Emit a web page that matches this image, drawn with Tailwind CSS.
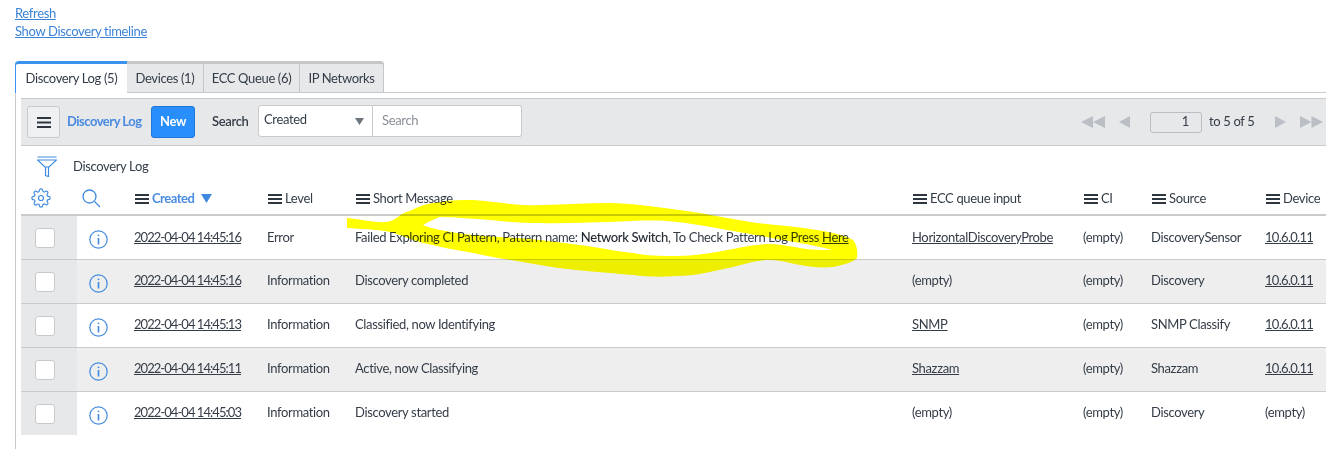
<!DOCTYPE html>
<html>
<head>
<meta charset="utf-8">
<script src="https://cdn.jsdelivr.net/npm/@tailwindcss/browser@4"></script>
</head>
<body class="relative bg-white overflow-hidden h-[449px] w-[1326px] font-['Lato','Noto_Sans',sans-serif] text-[13px] tracking-[-0.35px] text-[#343d47]">
  <div class="pt-[4px] pl-[15px] h-[61px]">
    <a class="block h-[18px] leading-[18px] text-[#3b83d8] underline">Refresh</a>
    <a class="block h-[18px] leading-[18px] text-[#3b83d8] underline">Show Discovery timeline</a>
  </div>

  <div class="ml-[15px] flex h-[32px] border-b border-[#c8cacc]">
    <div class="w-[112px] h-[32px] pt-[1px] bg-white border-t-[3px] border-l border-[#3b93ee] flex items-center justify-center rounded-tl-sm">Discovery Log (5)</div>
    <div class="w-[77px] pt-[1px] bg-[#e6e8ea] border-t-[3px] border-r border-[#c4c6c8] flex items-center justify-center">Devices (1)</div>
    <div class="w-[96px] pt-[1px] bg-[#e6e8ea] border-t-[3px] border-r border-[#c4c6c8] flex items-center justify-center">ECC Queue (6)</div>
    <div class="w-[84px] pt-[1px] bg-[#e6e8ea] border-t-[3px] border-r border-[#c4c6c8] flex items-center justify-center rounded-tr-sm">IP Networks</div>
  </div>

  <div class="ml-[15px] border-l border-[#c8cacc] pl-[5px] pt-[5px] h-[356px]">
    <div class="flex items-center h-[48px] bg-[#e6e8ea] border-y border-[#c8cacc] pl-[6px] pr-[3px]">
      <button class="w-[33px] h-[32px] border border-[#c8cacc] bg-[#eef0f1] rounded-[3px] flex items-center justify-center">
        <svg width="14" height="11" viewBox="0 0 14 11"><path d="M0 1h14M0 5.500h14M0 10h14" stroke="#2e3640" stroke-width="2"/></svg>
      </button>
      <span class="ml-[7px] w-[75px] whitespace-nowrap font-bold text-[#4a8be0] tracking-[-0.5px]">Discovery Log</span>
      <button class="ml-[9px] w-[44px] h-[32px] bg-[#278efc] border border-[#1f78d8] rounded-[3px] text-white font-bold">New</button>
      <span class="ml-[17px] w-[37px] font-semibold">Search</span>
      <div class="ml-[9px] w-[115px] h-[32px] bg-white border border-[#c8cacc] rounded-l-[3px] flex items-center justify-between pl-[5px] pr-[8px] pb-[3px] -mt-[2px]">
        <span>Created</span>
        <svg width="9" height="7" viewBox="0 0 9 7" class="mt-[3px]"><path d="M0 0h9L4.500 7z" fill="#6d757d"/></svg>
      </div>
      <div class="w-[149px] h-[32px] -mt-[2px] bg-white border border-l-0 border-[#c8cacc] rounded-r-[3px] flex items-center pl-[9px] text-[#8a9097]">Search</div>
      <div class="ml-auto flex items-center">
        <svg width="24" height="12" viewBox="0 0 24 12"><path d="M12 0v12L0 6zM24 0v12L12 6z" fill="#b9bfc5"/></svg>
        <svg class="ml-[14px]" width="11" height="12" viewBox="0 0 11 12"><path d="M11 0v12L0 6z" fill="#b9bfc5"/></svg>
        <div class="ml-[20px] w-[52px] h-[21px] border border-[#b9bfc5] rounded-[3px] flex items-center justify-end pr-[12px]">1</div>
        <span class="ml-[7px] w-[46px] whitespace-nowrap">to 5 of 5</span>
        <svg class="ml-[20px]" width="11" height="12" viewBox="0 0 11 12"><path d="M0 0v12l11-6z" fill="#b9bfc5"/></svg>
        <svg class="ml-[14px]" width="23" height="12" viewBox="0 0 23 12"><path d="M0 0v12l11.500-6zM11.500 0v12L23 6z" fill="#b9bfc5"/></svg>
      </div>
    </div>

    <div class="flex items-center h-[36px] pt-[5px]">
      <svg class="ml-[16px]" width="20" height="21" viewBox="0 0 20 21" fill="none" stroke="#3f8ae0" stroke-width="1.200"><path d="M0.500 1h19M0.500 4h19L12 11H8zM8 11h4"/><path d="M8.500 11v8.500l3 1V11" /></svg>
      <span class="ml-[16px]">Discovery Log</span>
    </div>

    <table class="table-fixed w-[1305px] border-collapse whitespace-nowrap">
      <colgroup>
        <col class="w-[56px]"><col class="w-[49px]"><col class="w-[133px]"><col class="w-[88px]"><col class="w-[557px]"><col class="w-[171px]"><col class="w-[68px]"><col class="w-[114px]"><col class="w-[69px]">
      </colgroup>
      <thead>
        <tr class="h-[33px] border-b-2 border-[#c8cacc] text-left font-medium">
          <th class="font-normal pl-[10px]">
            <svg width="20" height="20" viewBox="0 0 24 24" fill="none" stroke="#3f8ae0" stroke-width="1.400"><circle cx="12" cy="12" r="3"/><path d="M19.400 15a1.650 1.650 0 0 0 .33 1.820l.06.06a2 2 0 0 1 0 2.830 2 2 0 0 1-2.830 0l-.06-.06a1.650 1.650 0 0 0-1.820-.33 1.650 1.650 0 0 0-1 1.510V21a2 2 0 0 1-2 2 2 2 0 0 1-2-2v-.09A1.650 1.650 0 0 0 9 19.400a1.650 1.650 0 0 0-1.820.33l-.06.06a2 2 0 0 1-2.830 0 2 2 0 0 1 0-2.830l.06-.06a1.650 1.650 0 0 0 .33-1.820 1.650 1.650 0 0 0-1.510-1H3a2 2 0 0 1-2-2 2 2 0 0 1 2-2h.09A1.650 1.650 0 0 0 4.600 9a1.650 1.650 0 0 0-.33-1.820l-.06-.06a2 2 0 0 1 0-2.830 2 2 0 0 1 2.830 0l.06.06a1.650 1.650 0 0 0 1.820.33H9a1.650 1.650 0 0 0 1-1.510V3a2 2 0 0 1 2-2 2 2 0 0 1 2 2v.09a1.650 1.650 0 0 0 1 1.510 1.650 1.650 0 0 0 1.820-.33l.06-.06a2 2 0 0 1 2.830 0 2 2 0 0 1 0 2.830l-.06.06a1.650 1.650 0 0 0-.33 1.820V9a1.650 1.650 0 0 0 1.510 1H21a2 2 0 0 1 2 2 2 2 0 0 1-2 2h-.09a1.650 1.650 0 0 0-1.510 1z"/></svg>
          </th>
          <th class="font-normal pl-[5px]">
            <svg width="19" height="19" viewBox="0 0 19 19" fill="none" stroke="#3f8ae0" stroke-width="1.300"><circle cx="7.500" cy="7.500" r="6.500"/><path d="M12.500 12.500L18 18"/></svg>
          </th>
          <th class="font-normal pl-[9px] pt-[2px]"><span class="inline-flex items-center text-[#4a8be0] font-bold tracking-[-0.5px]"><svg class="mr-[3px]" width="14" height="10" viewBox="0 0 14 10"><path d="M0 1h14M0 5h14M0 9h14" stroke="#2e3640" stroke-width="2"/></svg>Created<svg class="ml-[7px]" width="11" height="9" viewBox="0 0 11 9"><path d="M0 0h11L5.500 9z" fill="#3f8ae0"/></svg></span></th>
          <th class="font-normal pl-[9px] pt-[2px]"><span class="inline-flex items-center"><svg class="mr-[3px]" width="14" height="10" viewBox="0 0 14 10"><path d="M0 1h14M0 5h14M0 9h14" stroke="#2e3640" stroke-width="2"/></svg>Level</span></th>
          <th class="font-normal pl-[9px] pt-[2px]"><span class="inline-flex items-center"><svg class="mr-[3px]" width="14" height="10" viewBox="0 0 14 10"><path d="M0 1h14M0 5h14M0 9h14" stroke="#2e3640" stroke-width="2"/></svg>Short Message</span></th>
          <th class="font-normal pl-[9px] pt-[2px]"><span class="inline-flex items-center"><svg class="mr-[3px]" width="14" height="10" viewBox="0 0 14 10"><path d="M0 1h14M0 5h14M0 9h14" stroke="#2e3640" stroke-width="2"/></svg>ECC queue input</span></th>
          <th class="font-normal pl-[9px] pt-[2px]"><span class="inline-flex items-center"><svg class="mr-[3px]" width="14" height="10" viewBox="0 0 14 10"><path d="M0 1h14M0 5h14M0 9h14" stroke="#2e3640" stroke-width="2"/></svg>CI</span></th>
          <th class="font-normal pl-[9px] pt-[2px]"><span class="inline-flex items-center"><svg class="mr-[3px]" width="14" height="10" viewBox="0 0 14 10"><path d="M0 1h14M0 5h14M0 9h14" stroke="#2e3640" stroke-width="2"/></svg>Source</span></th>
          <th class="font-normal pl-[9px] pt-[2px]"><span class="inline-flex items-center"><svg class="mr-[3px]" width="14" height="10" viewBox="0 0 14 10"><path d="M0 1h14M0 5h14M0 9h14" stroke="#2e3640" stroke-width="2"/></svg>Device</span></th>
        </tr>
      </thead>
      <tbody>
        <tr class="h-[44px] border-b border-[#c8cacc] bg-white">
          <td class="bg-[#e6e8ea] pl-[14px]"><div class="w-[20px] h-[20px] mt-[1px] bg-white border border-[#c8cacc] rounded-[3px]"></div></td>
          <td class="pl-[12px]"><svg width="19" height="19" viewBox="0 0 19 19" fill="none" stroke="#3f8ae0" stroke-width="1.200" class="mt-[4px]"><circle cx="9.500" cy="9.500" r="8.700"/><path d="M9.500 8v6.500" stroke-width="1.600"/><circle cx="9.500" cy="5.300" r=".9" fill="#3f8ae0" stroke="none"/></svg></td>
          <td class="pl-[8px]"><a class="underline tracking-[-0.95px]">2022-04-04 14:45:16</a></td>
          <td class="pl-[8px]">Error</td>
          <td class="pl-[8px]">Failed Exploring CI Pattern, Pattern name: <span class="font-medium text-[#232a32]">Network Switch</span>, To Check Pattern Log Press <a class="underline">Here</a></td>
          <td class="pl-[8px]"><a class="underline">HorizontalDiscoveryProbe</a></td>
          <td class="pl-[8px]">(empty)</td>
          <td class="pl-[8px]">DiscoverySensor</td>
          <td class="pl-[8px]"><a class="underline tracking-[-0.7px]">10.6.0.11</a></td>
        </tr>
        <tr class="h-[44px] border-b border-[#c8cacc] bg-[#eeeeee]">
          <td class="bg-[#e6e8ea] pl-[14px]"><div class="w-[20px] h-[20px] mt-[1px] bg-white border border-[#c8cacc] rounded-[3px]"></div></td>
          <td class="pl-[12px]"><svg width="19" height="19" viewBox="0 0 19 19" fill="none" stroke="#3f8ae0" stroke-width="1.200" class="mt-[4px]"><circle cx="9.500" cy="9.500" r="8.700"/><path d="M9.500 8v6.500" stroke-width="1.600"/><circle cx="9.500" cy="5.300" r=".9" fill="#3f8ae0" stroke="none"/></svg></td>
          <td class="pl-[8px]"><a class="underline tracking-[-0.95px]">2022-04-04 14:45:16</a></td>
          <td class="pl-[8px]">Information</td>
          <td class="pl-[8px]">Discovery completed</td>
          <td class="pl-[8px]">(empty)</td>
          <td class="pl-[8px]">(empty)</td>
          <td class="pl-[8px]">Discovery</td>
          <td class="pl-[8px]"><a class="underline tracking-[-0.7px]">10.6.0.11</a></td>
        </tr>
        <tr class="h-[44px] border-b border-[#c8cacc] bg-white">
          <td class="bg-[#e6e8ea] pl-[14px]"><div class="w-[20px] h-[20px] mt-[1px] bg-white border border-[#c8cacc] rounded-[3px]"></div></td>
          <td class="pl-[12px]"><svg width="19" height="19" viewBox="0 0 19 19" fill="none" stroke="#3f8ae0" stroke-width="1.200" class="mt-[4px]"><circle cx="9.500" cy="9.500" r="8.700"/><path d="M9.500 8v6.500" stroke-width="1.600"/><circle cx="9.500" cy="5.300" r=".9" fill="#3f8ae0" stroke="none"/></svg></td>
          <td class="pl-[8px]"><a class="underline tracking-[-0.95px]">2022-04-04 14:45:13</a></td>
          <td class="pl-[8px]">Information</td>
          <td class="pl-[8px]">Classified, now Identifying</td>
          <td class="pl-[8px]"><a class="underline">SNMP</a></td>
          <td class="pl-[8px]">(empty)</td>
          <td class="pl-[8px]">SNMP Classify</td>
          <td class="pl-[8px]"><a class="underline tracking-[-0.7px]">10.6.0.11</a></td>
        </tr>
        <tr class="h-[44px] border-b border-[#c8cacc] bg-[#eeeeee]">
          <td class="bg-[#e6e8ea] pl-[14px]"><div class="w-[20px] h-[20px] mt-[1px] bg-white border border-[#c8cacc] rounded-[3px]"></div></td>
          <td class="pl-[12px]"><svg width="19" height="19" viewBox="0 0 19 19" fill="none" stroke="#3f8ae0" stroke-width="1.200" class="mt-[4px]"><circle cx="9.500" cy="9.500" r="8.700"/><path d="M9.500 8v6.500" stroke-width="1.600"/><circle cx="9.500" cy="5.300" r=".9" fill="#3f8ae0" stroke="none"/></svg></td>
          <td class="pl-[8px]"><a class="underline tracking-[-0.95px]">2022-04-04 14:45:11</a></td>
          <td class="pl-[8px]">Information</td>
          <td class="pl-[8px]">Active, now Classifying</td>
          <td class="pl-[8px]"><a class="underline">Shazzam</a></td>
          <td class="pl-[8px]">(empty)</td>
          <td class="pl-[8px]">Shazzam</td>
          <td class="pl-[8px]"><a class="underline tracking-[-0.7px]">10.6.0.11</a></td>
        </tr>
        <tr class="h-[44px] border-b border-transparent bg-white">
          <td class="bg-[#e6e8ea] pl-[14px]"><div class="w-[20px] h-[20px] mt-[1px] bg-white border border-[#c8cacc] rounded-[3px]"></div></td>
          <td class="pl-[12px]"><svg width="19" height="19" viewBox="0 0 19 19" fill="none" stroke="#3f8ae0" stroke-width="1.200" class="mt-[4px]"><circle cx="9.500" cy="9.500" r="8.700"/><path d="M9.500 8v6.500" stroke-width="1.600"/><circle cx="9.500" cy="5.300" r=".9" fill="#3f8ae0" stroke="none"/></svg></td>
          <td class="pl-[8px]"><a class="underline tracking-[-0.95px]">2022-04-04 14:45:03</a></td>
          <td class="pl-[8px]">Information</td>
          <td class="pl-[8px]">Discovery started</td>
          <td class="pl-[8px]">(empty)</td>
          <td class="pl-[8px]">(empty)</td>
          <td class="pl-[8px]">Discovery</td>
          <td class="pl-[8px]">(empty)</td>
        </tr>
      </tbody>
    </table>
  </div>

  <svg class="absolute left-0 top-0 mix-blend-multiply pointer-events-none" width="1326" height="449" viewBox="0 0 1326 449">
    <path fill="#ffff00" fill-rule="evenodd" d="M347 218C360 219 375 223 387 222C392 221 395 219 398 217C402 213 407 212 412 210C422 205 430 203 440 202C450 200 462 200 473 200C490 201 505 204 523 205C550 206 580 203 610 203C620 203 630 204 640 205C660 207 680 210 700 213C716 216 733 219 750 222C772 225 795 226 817 230C830 232 845 235 853 240C857 245 858 252 857 258C852 263 842 265 833 267C822 268 810 267 800 265C790 263 780 260 770 260C757 260 745 264 733 267C715 271 695 276 677 276C662 277 647 277 633 275C622 274 618 274 610 273C585 271 562 269 540 265C518 261 495 258 473 253C456 250 440 247 423 243C412 240 401 235 390 232C376 229 360 229 347 228ZM423 225C428 222 434 219 440 217C456 217 473 219 490 220C507 222 523 223 540 223C563 224 587 222 610 222C630 221 648 220 667 221C690 223 711 227 733 231C756 235 778 239 800 243C811 245 822 247 832 250C821 250 811 250 800 248C789 246 778 244 767 244C750 245 734 249 717 252C704 254 690 256 677 256C662 256 648 256 633 253C622 252 611 250 600 248C580 245 560 242 540 240C518 238 495 237 473 235C462 234 451 232 440 230C434 229 428 227 423 225Z"/>
  </svg>
</body>
</html>
